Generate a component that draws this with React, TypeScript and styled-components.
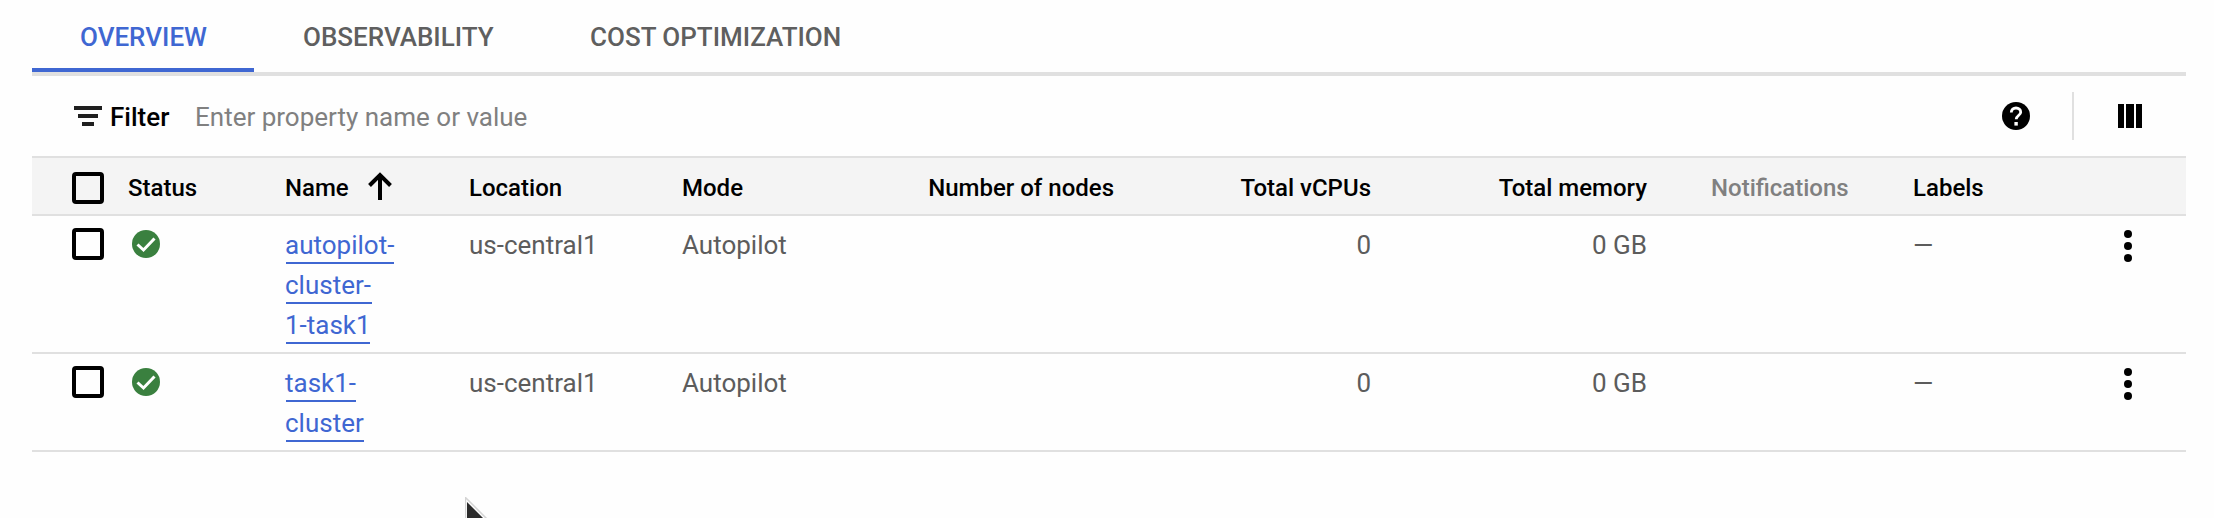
import React from 'react';
import styled, { createGlobalStyle, css } from 'styled-components';

const blue = '#3f67d2';
const line = '#e0e0e0';

const GlobalStyle = createGlobalStyle`
  * { box-sizing: border-box; }
  html, body { margin: 0; background: #fefefe; }
  body { font-family: Roboto, sans-serif; font-size: 26px; line-height: 40px; color: #5c5c5c; }
  svg { display: block; }
`;

const Page = styled.main`
  position: relative;
  height: 518px;
  overflow: hidden;
  padding: 0 28px 0 32px;
`;

const Tabs = styled.nav`
  display: flex;
  height: 76px;
  border-bottom: 4px solid ${line};
`;

const Tab = styled.button<{ $active?: boolean; $width: number }>`
  width: ${p => p.$width}px;
  height: 72px;
  padding: 6px 0 0 48px;
  border: 0;
  border-bottom: 4px solid ${p => (p.$active ? blue : 'transparent')};
  background: none;
  font: 500 26px/40px Roboto, sans-serif;
  text-align: left;
  white-space: nowrap;
  color: ${p => (p.$active ? blue : '#5f5f5f')};
`;

const ActiveTab = styled(Tab)`
  margin-right: 1px;
`;

const Toolbar = styled.div`
  display: flex;
  align-items: center;
  height: 80px;
  padding: 0 44px 0 42px;
`;

const FilterLabel = styled.span`
  width: 85px;
  margin-left: 8px;
  padding-top: 2px;
  font-weight: 500;
  color: #000;
`;

const FilterInput = styled.input`
  flex: 1;
  min-width: 0;
  padding: 2px 0 0;
  border: 0;
  outline: 0;
  background: none;
  font: 400 26px/40px Roboto, sans-serif;
  color: #757575;
  &::placeholder { color: #808080; opacity: 1; }
`;

const Divider = styled.span`
  width: 2px;
  height: 48px;
  margin: 0 44px 0 42px;
  background: ${line};
`;

const Row = styled.div<{ $head?: boolean }>`
  display: grid;
  grid-template-columns: 96px 157px 184px 213px 231px 201px 257px 276px 266px 157px 116px;
  border-bottom: 2px solid ${line};
  ${p => p.$head ? css`
    height: 60px;
    border-top: 2px solid ${line};
    background: #f4f4f4;
    font-size: 24px;
    font-weight: 500;
    color: #000;
  ` : css`padding: 10px 0 6px;`}
`;

const Cell = styled.div<{ $right?: boolean }>`
  line-height: 38px;
  text-align: ${p => (p.$right ? 'right' : 'left')};
  white-space: nowrap;
`;

const HeadCell = styled.div<{ $right?: boolean; $muted?: boolean }>`
  display: flex;
  justify-content: ${p => (p.$right ? 'flex-end' : 'flex-start')};
  padding-top: 10px;
  padding-left: ${p => (p.$muted ? 64 : 0)}px;
  color: ${p => (p.$muted ? '#808080' : 'inherit')};
  white-space: nowrap;
`;

const CheckCell = styled.div<{ $head?: boolean }>`
  padding: ${p => (p.$head ? 14 : 2)}px 0 0 40px;
`;

const Checkbox = styled.span`
  display: block;
  width: 32px;
  height: 32px;
  border: 4px solid #000;
  border-radius: 4px;
`;

const StatusCell = styled.div`
  padding: 4px 0 0 4px;
`;

const NameCell = styled.div`
  display: flex;
  flex-direction: column;
  align-items: flex-start;
`;

const NameLine = styled.a<{ $width: number }>`
  width: ${p => p.$width}px;
  height: 38px;
  margin: 0 0 2px 1px;
  border-bottom: 2px solid ${blue};
  line-height: 38px;
  text-indent: -1px;
  color: ${blue};
  white-space: nowrap;
`;

const SortIcon = styled.svg`
  margin: 4px 0 0 19px;
`;

const MenuCell = styled.div`
  display: flex;
  justify-content: center;
  padding-top: 4px;
`;

const Pointer = styled.svg`
  position: absolute;
  left: 465px;
  top: 497px;
`;

const tabs = [
  { label: 'OVERVIEW', width: 222, active: true },
  { label: 'OBSERVABILITY', width: 287 },
  { label: 'COST OPTIMIZATION', width: 350 },
];

const clusters = [
  { lines: [['autopilot-', 108], ['cluster-', 86], ['1-task1', 84]] as [string, number][] },
  { lines: [['task1-', 70], ['cluster', 78]] as [string, number][] },
];

const FilterIcon = () => (
  <svg width="28" height="20" viewBox="0 0 28 20" fill="#1f1f1f">
    <path d="M0 0h28v4H0zM4 8h20v4H4zM8 16h12v4H8z" />
  </svg>
);

const HelpIcon = () => (
  <svg width="28" height="28" viewBox="0 0 28 28">
    <circle cx="14" cy="14" r="14" fill="#000" />
    <path d="M9.3 10.5C9.3 7.6 11.4 6 14 6s4.7 1.7 4.7 4.2c0 3.2-4.5 3.5-4.5 7" fill="none" stroke="#fff" strokeWidth="2.8" />
    <path d="M12.4 20h3.4v3.6h-3.4z" fill="#fff" />
  </svg>
);

const ColumnsIcon = () => (
  <svg width="24" height="24" viewBox="0 0 24 24">
    <path d="M0 0h6v24H0zM8 0h8v24H8zM18 0h6v24h-6z" />
  </svg>
);

const CheckIcon = () => (
  <svg width="28" height="28" viewBox="0 0 28 28">
    <circle cx="14" cy="14" r="14" fill="#3a803f" />
    <path d="M5.5 14.5l6 5.5L22.5 8.5" fill="none" stroke="#fff" strokeWidth="3" />
  </svg>
);

const DotsIcon = () => (
  <svg width="8" height="32" viewBox="0 0 8 32">
    <circle cx="4" cy="4" r="4" />
    <circle cx="4" cy="16" r="4" />
    <circle cx="4" cy="28" r="4" />
  </svg>
);

export default function App() {
  return (
    <>
      <GlobalStyle />
      <Page>
        <Tabs>
          {tabs.map(t => {
            const Item = t.active ? ActiveTab : Tab;
            return <Item key={t.label} $active={t.active} $width={t.width}>{t.label}</Item>;
          })}
        </Tabs>
        <Toolbar>
          <FilterIcon />
          <FilterLabel>Filter</FilterLabel>
          <FilterInput placeholder="Enter property name or value" />
          <HelpIcon />
          <Divider />
          <ColumnsIcon />
        </Toolbar>
        <Row $head>
          <CheckCell $head><Checkbox /></CheckCell>
          <HeadCell>Status</HeadCell>
          <HeadCell>
            Name
            <SortIcon width="24" height="28" viewBox="0 0 24 28" fill="none" stroke="#000" strokeWidth="4">
              <path d="M12 28V3M1.5 13.5L12 3l10.5 10.5" />
            </SortIcon>
          </HeadCell>
          <HeadCell>Location</HeadCell>
          <HeadCell>Mode</HeadCell>
          <HeadCell $right>Number of nodes</HeadCell>
          <HeadCell $right>Total vCPUs</HeadCell>
          <HeadCell $right>Total memory</HeadCell>
          <HeadCell $muted>Notifications</HeadCell>
          <HeadCell>Labels</HeadCell>
        </Row>
        {clusters.map(c => (
          <Row key={c.lines[0][0]}>
            <CheckCell><Checkbox /></CheckCell>
            <StatusCell><CheckIcon /></StatusCell>
            <NameCell>
              {c.lines.map(([text, width]) => <NameLine key={text} $width={width}>{text}</NameLine>)}
            </NameCell>
            <Cell>us-central1</Cell>
            <Cell>Autopilot</Cell>
            <Cell />
            <Cell $right>0</Cell>
            <Cell $right>0 GB</Cell>
            <Cell />
            <Cell>—</Cell>
            <MenuCell><DotsIcon /></MenuCell>
          </Row>
        ))}
        <Pointer width="28" height="22" viewBox="0 0 28 22">
          <path d="M1 1v23h23z" fill="#fff" />
          <path d="M.5 0v24M1 1l23 23" fill="none" stroke="#d4d4d4" strokeWidth="1.5" />
          <path d="M2 5v18h18z" fill="#2b2b2b" />
        </Pointer>
      </Page>
    </>
  );
}
